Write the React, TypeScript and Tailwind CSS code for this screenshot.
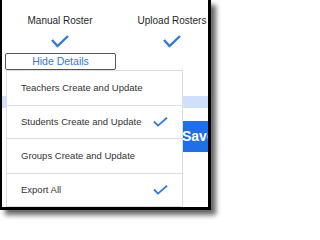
const items = [
  { label: 'Teachers Create and Update', checked: false, h: 'h-[34px]' },
  { label: 'Students Create and Update', checked: true, h: 'h-[33px]' },
  { label: 'Groups Create and Update', checked: false, h: 'h-[35px]' },
  { label: 'Export All', checked: true, h: 'h-[33px]' },
]

function Check({ small }: { small?: boolean }) {
  return small ? (
    <svg width="15" height="10" viewBox="0 0 15 10" fill="none">
      <path d="M1 4.5 L5 8.6 L14 0.8" stroke="#2b7be6" strokeWidth="1.8" />
    </svg>
  ) : (
    <svg width="18" height="13" viewBox="0 0 18 13" fill="none">
      <path d="M1 5 L6.5 11 L17 1" stroke="#2b7be6" strokeWidth="2.4" />
    </svg>
  )
}

export default function App() {
  return (
    <div className="w-[220px] h-[220px] bg-white font-['Liberation_Sans',Arial,sans-serif]">
      <div className="w-[211px] h-[210px] border-l-2 border-r-[3px] border-b-[3px] border-black shadow-[5px_5px_5px_rgba(0,0,0,0.6)] bg-white">
        <div className="relative w-full h-full overflow-hidden">
          <div className="flex pt-[15px] text-[10px] leading-[12px] text-[#1f1f1f] whitespace-nowrap">
            <div className="w-[116px] shrink-0 flex flex-col items-center">
              <span>Manual Roster</span>
              <div className="mt-[8px]"><Check /></div>
            </div>
            <div className="w-[108px] shrink-0 flex flex-col items-center">
              <span>Upload Rosters</span>
              <div className="mt-[8px]"><Check /></div>
            </div>
          </div>
          <button className="ml-[3px] mt-[3px] w-[111px] h-[17px] border border-[#555] rounded-[2px] text-[10.5px] leading-[15px] text-[#2b7be6]">
            Hide Details
          </button>
          <div className="mt-[24px] h-[12px] bg-[#cfe1fa]" />
          <div className="mt-[13px] flex justify-end">
            <div className="h-[31px] w-[60px] shrink-0 bg-[#1f6feb] text-white font-bold text-[14px] flex items-center pl-[4px] -mr-[30px]">
              Save
            </div>
          </div>
          <div className="absolute left-[4px] top-[70px] w-[177px] bg-white border border-[#dedede]">
            {items.map((it, i) => (
              <div
                key={it.label}
                className={`${it.h} flex items-center justify-between pl-[14px] pr-[14px] text-[9.5px] text-[#333] ${i > 0 ? 'border-t border-[#dedede]' : ''}`}
              >
                <span>{it.label}</span>
                {it.checked && <Check small />}
              </div>
            ))}
          </div>
        </div>
      </div>
    </div>
  )
}
